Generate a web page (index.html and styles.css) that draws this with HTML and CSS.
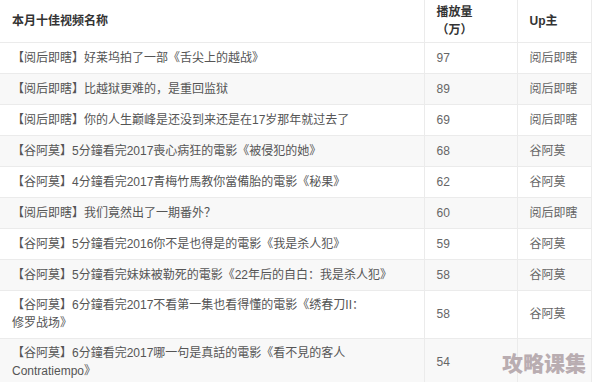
FILE: index.html
```html
<!DOCTYPE html>
<html lang="zh">
<head>
<meta charset="utf-8">
<link rel="stylesheet" href="styles.css">
</head>
<body>
<div class="wrap">
<table class="rank">
  <colgroup>
    <col class="c-name">
    <col class="c-num">
    <col class="c-up">
  </colgroup>
  <thead>
    <tr><th>本月十佳视频名称</th><th>播放量<br>（万）</th><th>Up主</th></tr>
  </thead>
  <tbody>
    <tr><td>【阅后即瞎】好莱坞拍了一部《舌尖上的越战》</td><td>97</td><td>阅后即瞎</td></tr>
    <tr><td>【阅后即瞎】比越狱更难的，是重回监狱</td><td>89</td><td>阅后即瞎</td></tr>
    <tr><td>【阅后即瞎】你的人生巅峰是还没到来还是在17岁那年就过去了</td><td>69</td><td>阅后即瞎</td></tr>
    <tr><td>【谷阿莫】5分鐘看完2017喪心病狂的電影《被侵犯的她》</td><td>68</td><td>谷阿莫</td></tr>
    <tr><td>【谷阿莫】4分鐘看完2017青梅竹馬教你當備胎的電影《秘果》</td><td>62</td><td>谷阿莫</td></tr>
    <tr><td>【阅后即瞎】我们竟然出了一期番外？</td><td>60</td><td>阅后即瞎</td></tr>
    <tr><td>【谷阿莫】5分鐘看完2016你不是也得是的電影《我是杀人犯》</td><td>59</td><td>谷阿莫</td></tr>
    <tr><td>【谷阿莫】5分鐘看完妹妹被勒死的電影《22年后的自白：我是杀人犯》</td><td>58</td><td>谷阿莫</td></tr>
    <tr class="two"><td>【谷阿莫】6分鐘看完2017不看第一集也看得懂的電影《绣春刀II：<br>修罗战场》</td><td>58</td><td>谷阿莫</td></tr>
    <tr class="two"><td>【谷阿莫】6分鐘看完2017哪一句是真話的電影《看不見的客人<br>Contratiempo》</td><td>54</td><td></td></tr>
  </tbody>
</table>
<div class="mark">攻略课集</div>
</div>
</body>
</html>
```
FILE: styles.css
```css
html, body {
  margin: 0;
  padding: 0;
  background: #fff;
}
body {
  font-family: "Liberation Sans", "Noto Sans CJK SC", sans-serif;
  font-size: 12px;
  color: #666;
  overflow: hidden;
}
.wrap {
  position: relative;
  width: 594px;
  height: 382px;
  overflow: hidden;
}
.rank {
  border-collapse: collapse;
  width: 591px;
  table-layout: fixed;
}
.c-name { width: 424px; }
.c-num { width: 93px; }
.c-up { width: 74px; }
.rank th, .rank td {
  padding: 6px 12px;
  line-height: 18px;
  height: 18px;
  text-align: left;
  vertical-align: middle;
  border: 1px solid #ebebeb;
  white-space: nowrap;
}
.rank th {
  padding-top: 3px;
  padding-bottom: 3px;
  font-weight: bold;
  color: #333;
}
.rank tr > :first-child { border-left: none; }
.rank thead tr > * { border-top: none; }
.rank td:first-child { color: #555; }
.rank tbody tr:nth-child(even) { background: #f8f8f8; }
.rank tr.two td { padding-top: 5px; padding-bottom: 6px; }
.mark {
  position: absolute;
  left: 502px;
  top: 350px;
  font-family: "Noto Sans CJK SC", sans-serif;
  font-weight: 900;
  font-size: 21px;
  line-height: 24px;
  color: #b9adb1;
  white-space: nowrap;
}
```
